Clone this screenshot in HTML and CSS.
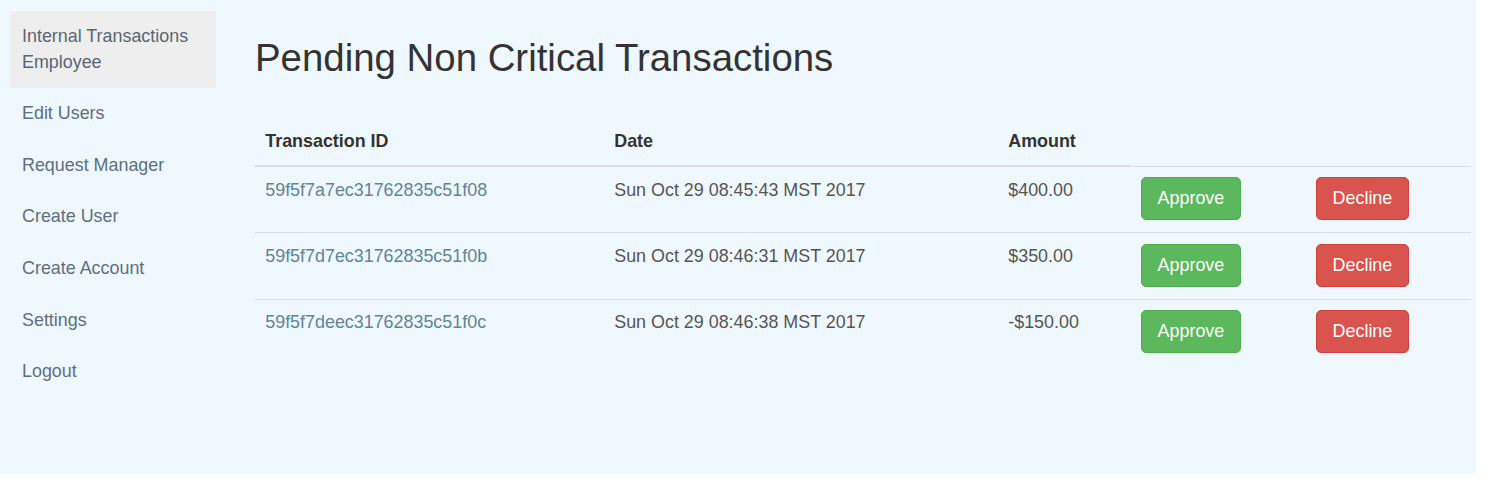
FILE: index.html
```html
<!DOCTYPE html>
<html>
<head>
<meta charset="utf-8">
<link rel="stylesheet" href="styles.css">
</head>
<body>
<div class="page">
  <nav class="sidebar">
    <a class="nav-item active" href="#">Internal Transactions Employee</a>
    <a class="nav-item" href="#">Edit Users</a>
    <a class="nav-item" href="#">Request Manager</a>
    <a class="nav-item" href="#">Create User</a>
    <a class="nav-item" href="#">Create Account</a>
    <a class="nav-item" href="#">Settings</a>
    <a class="nav-item" href="#">Logout</a>
  </nav>
  <main class="main">
    <h2 class="title">Pending Non Critical Transactions</h2>
    <table class="tx-table">
      <colgroup>
        <col class="c-id">
        <col class="c-date">
        <col class="c-amt">
        <col class="c-approve">
        <col class="c-decline">
      </colgroup>
      <thead>
        <tr>
          <th>Transaction ID</th>
          <th>Date</th>
          <th>Amount</th>
        </tr>
      </thead>
      <tbody>
        <tr>
          <td><a class="tx-link" href="#">59f5f7a7ec31762835c51f08</a></td>
          <td>Sun Oct 29 08:45:43 MST 2017</td>
          <td>$400.00</td>
          <td><button class="btn btn-green">Approve</button></td>
          <td><button class="btn btn-red">Decline</button></td>
        </tr>
        <tr>
          <td><a class="tx-link" href="#">59f5f7d7ec31762835c51f0b</a></td>
          <td>Sun Oct 29 08:46:31 MST 2017</td>
          <td>$350.00</td>
          <td><button class="btn btn-green">Approve</button></td>
          <td><button class="btn btn-red">Decline</button></td>
        </tr>
        <tr>
          <td><a class="tx-link" href="#">59f5f7deec31762835c51f0c</a></td>
          <td>Sun Oct 29 08:46:38 MST 2017</td>
          <td>-$150.00</td>
          <td><button class="btn btn-green">Approve</button></td>
          <td><button class="btn btn-red">Decline</button></td>
        </tr>
      </tbody>
    </table>
  </main>
</div>
</body>
</html>
```

FILE: styles.css
```css
html, body {
  margin: 0;
  padding: 0;
  background: #ffffff;
}

body {
  font-family: "Liberation Sans", Arial, sans-serif;
  font-size: 17.9px;
  line-height: 25.6px;
  color: #555555;
}

.page {
  width: 1476px;
  height: 474px;
  background: #f0f8ff;
  display: flex;
  box-sizing: border-box;
}

.sidebar {
  width: 206px;
  margin-left: 10px;
  padding-top: 11px;
  display: flex;
  flex-direction: column;
}

.nav-item {
  display: block;
  padding: 12.9px 12px;
  line-height: 25.8px;
  color: #5e6f7f;
  text-decoration: none;
}

.nav-item.active {
  background: #efeeee;
  color: #5a6673;
}

.main {
  margin-left: 39px;
  width: 1216px;
  padding-top: 37px;
}

.title {
  margin: 0 0 40px 0;
  font-size: 38.4px;
  line-height: 42.2px;
  font-weight: 500;
  color: #333333;
}

.tx-table {
  width: 1216px;
  border-collapse: collapse;
  border-spacing: 0;
  table-layout: fixed;
}

.c-id { width: 349px; }
.c-date { width: 394px; }
.c-amt { width: 133px; }
.c-approve { width: 175px; }
.c-decline { width: 165px; }

.tx-table th {
  text-align: left;
  font-weight: bold;
  color: #333333;
  padding: 10.24px;
  line-height: 25.6px;
  border-bottom: 2.6px solid #dddddd;
  vertical-align: bottom;
}

.tx-table td {
  padding: 10.6px 10.24px 12px;
  line-height: 25.6px;
  border-top: 1.3px solid #dddddd;
  vertical-align: top;
  color: #555555;
}

.tx-link {
  color: #5f8597;
  text-decoration: none;
}

.btn {
  font-family: "Liberation Sans", Arial, sans-serif;
  font-size: 17.9px;
  line-height: 25.6px;
  padding: 7.7px 15.36px;
  border: 1.3px solid transparent;
  border-radius: 5px;
  color: #ffffff;
  cursor: pointer;
  display: inline-block;
}

.btn-green {
  background: #5cb85c;
  border-color: #4cae4c;
}

.btn-red {
  background: #d9534f;
  border-color: #d43f3a;
}
```
